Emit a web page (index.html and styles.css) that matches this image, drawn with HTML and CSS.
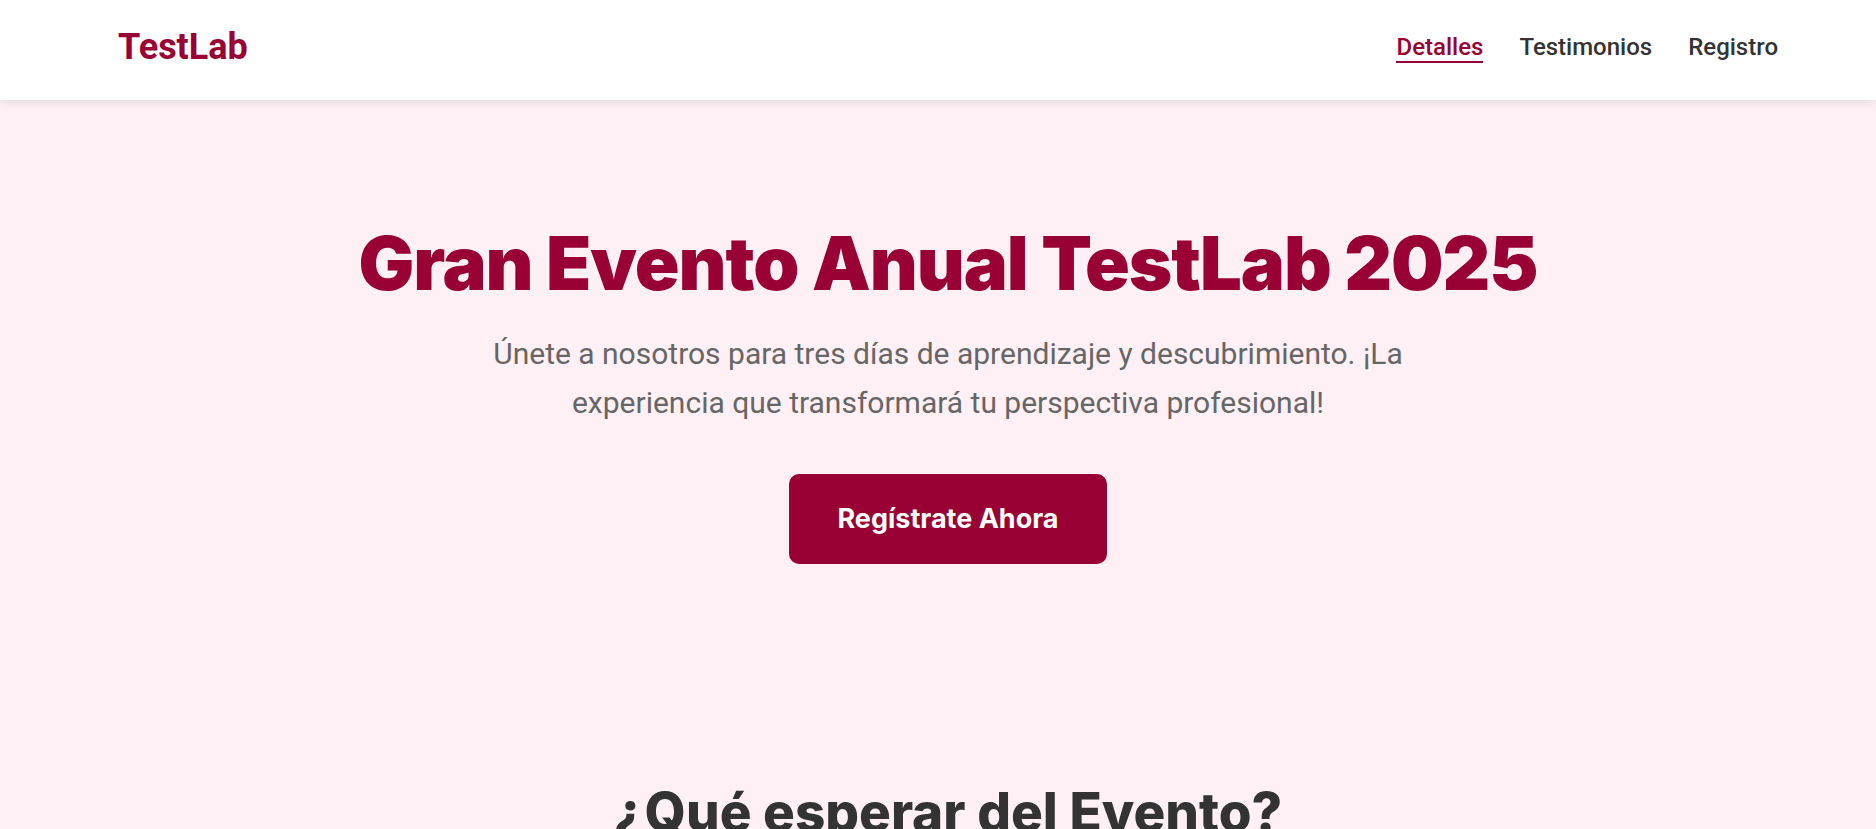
FILE: index.html
```html
<!DOCTYPE html>
<html lang="es">
<head>
<meta charset="utf-8">
<title>TestLab</title>
<link rel="stylesheet" href="styles.css">
</head>
<body>
<header class="site-header">
  <div class="logo">TestLab</div>
  <nav class="nav">
    <a class="nav-link active" href="#detalles">Detalles</a>
    <a class="nav-link" href="#testimonios">Testimonios</a>
    <a class="nav-link" href="#registro">Registro</a>
  </nav>
</header>
<main class="page">
  <section class="hero">
    <h1 class="hero-title">Gran Evento Anual TestLab 2025</h1>
    <p class="hero-text">Únete a nosotros para tres días de aprendizaje y descubrimiento. ¡La experiencia que transformará tu perspectiva profesional!</p>
    <a class="cta" href="#registro">Regístrate Ahora</a>
  </section>
  <section class="details" id="detalles">
    <h2 class="section-title">¿Qué esperar del Evento?</h2>
  </section>
</main>
</body>
</html>
```

FILE: styles.css
```css
* { box-sizing: border-box; }
html, body { margin: 0; padding: 0; }
body {
  background: #fff0f5;
  font-family: Roboto, "Noto Sans", sans-serif;
  color: #333;
  overflow: hidden;
}
.site-header {
  height: 100px;
  background: #fff;
  display: flex;
  align-items: center;
  justify-content: space-between;
  padding: 0 98px 0 118px;
  box-shadow: 0 2px 10px rgba(0, 0, 0, 0.1);
  position: relative;
  z-index: 2;
}
.logo {
  font-family: Roboto, sans-serif;
  font-weight: 700;
  font-size: 36px;
  line-height: 42px;
  color: #990033;
  margin-top: -6px;
}
.nav {
  display: flex;
  gap: 36px;
  margin-top: -4px;
}
.nav-link {
  font-family: Roboto, sans-serif;
  font-weight: 500;
  font-size: 24px;
  color: #333;
  text-decoration: none;
  border-bottom: 2px solid transparent;
}
.nav-link.active {
  color: #990033;
  border-bottom-color: #990033;
}
.hero {
  padding: 119px 0 120px 20px;
  text-align: center;
  display: flex;
  flex-direction: column;
  align-items: center;
}
.hero-title {
  margin: 0;
  font-family: Inter, sans-serif;
  font-weight: 900;
  font-size: 74px;
  line-height: 1.2;
  color: #990033;
  letter-spacing: -1.1px;
}
.hero-text {
  margin: 21px 0 0;
  max-width: 960px;
  font-size: 30px;
  line-height: 49px;
  color: #666;
}
.cta {
  margin-top: 47px;
  display: inline-block;
  background: #990033;
  color: #fff;
  text-decoration: none;
  font-family: Inter, sans-serif;
  font-weight: 700;
  font-size: 27px;
  line-height: 32px;
  padding: 29px 48px;
  border-radius: 10px;
}
.details {
  padding: 97px 0 60px 20px;
  text-align: center;
}
.section-title {
  margin: 0;
  font-family: Inter, sans-serif;
  font-weight: 800;
  font-size: 53px;
  line-height: 1.2;
  color: #333;
}
```
